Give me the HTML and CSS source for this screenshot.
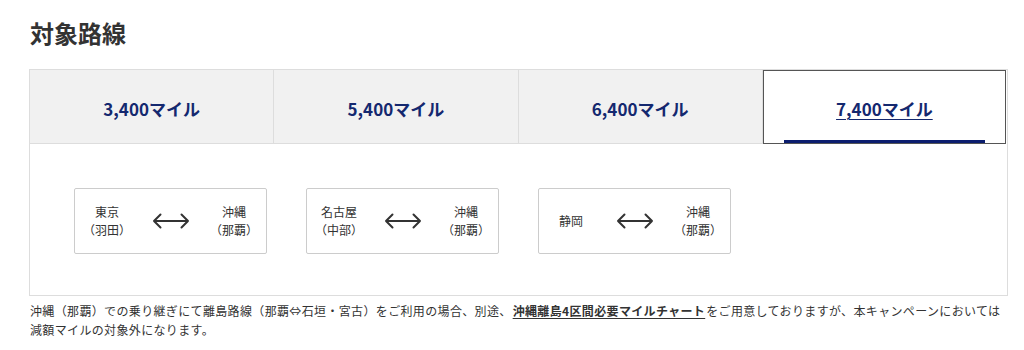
FILE: index.html
```html
<!DOCTYPE html>
<html lang="ja">
<head>
<meta charset="utf-8">
<link rel="stylesheet" href="styles.css">
</head>
<body>
<div class="page">
  <h2 class="title">対象路線</h2>
  <div class="tabbox">
    <div class="tabs">
      <div class="tab">3,400マイル</div>
      <div class="tab">5,400マイル</div>
      <div class="tab">6,400マイル</div>
      <div class="tab active"><span>7,400マイル</span></div>
    </div>
    <div class="panel">
      <div class="card">
        <div class="place">東京<br>（羽田）</div>
        <svg class="arrow" width="38" height="16" viewBox="0 0 38 16"><path d="M2 8H36M8.5 1.5L2 8L8.5 14.5M29.5 1.5L36 8L29.5 14.5" fill="none" stroke="#333" stroke-width="2" stroke-linecap="round" stroke-linejoin="round"/></svg>
        <div class="place">沖縄<br>（那覇）</div>
      </div>
      <div class="card">
        <div class="place">名古屋<br>（中部）</div>
        <svg class="arrow" width="38" height="16" viewBox="0 0 38 16"><path d="M2 8H36M8.5 1.5L2 8L8.5 14.5M29.5 1.5L36 8L29.5 14.5" fill="none" stroke="#333" stroke-width="2" stroke-linecap="round" stroke-linejoin="round"/></svg>
        <div class="place">沖縄<br>（那覇）</div>
      </div>
      <div class="card">
        <div class="place">静岡</div>
        <svg class="arrow" width="38" height="16" viewBox="0 0 38 16"><path d="M2 8H36M8.5 1.5L2 8L8.5 14.5M29.5 1.5L36 8L29.5 14.5" fill="none" stroke="#333" stroke-width="2" stroke-linecap="round" stroke-linejoin="round"/></svg>
        <div class="place">沖縄<br>（那覇）</div>
      </div>
    </div>
  </div>
  <p class="note">沖縄（那覇）での乗り継ぎにて離島路線（那覇⇔石垣・宮古）をご利用の場合、別途、<a class="link">沖縄離島4区間必要マイルチャート</a>をご用意しておりますが、本キャンペーンにおいては減額マイルの対象外になります。</p>
</div>
</body>
</html>
```

FILE: styles.css
```css
html, body {
  margin: 0;
  padding: 0;
  background: #fff;
}
body {
  font-family: "Noto Sans CJK JP", "Noto Sans", sans-serif;
  color: #333;
}
.page {
  padding: 0 16px 0 29px;
}
.title {
  margin: 0;
  padding: 18px 0 0 1px;
  height: 69px;
  box-sizing: border-box;
  font-size: 24px;
  line-height: 30px;
  font-weight: 700;
  color: #333;
}
.tabbox {
  width: 979px;
}
.tabs {
  display: flex;
  border: 1px solid #ddd;
  border-bottom: none;
}
.tab {
  flex: 1;
  height: 74px;
  box-sizing: border-box;
  padding-top: 3px;
  display: flex;
  align-items: center;
  justify-content: center;
  background: #f1f1f1;
  border-right: 1px solid #ddd;
  border-bottom: 1px solid #ddd;
  font-size: 17px;
  font-weight: 700;
  color: #14286f;
}
.tab:last-child {
  border-right: none;
}
.tab.active {
  position: relative;
  background: #fff;
  box-shadow: inset 0 0 0 1px #555;
  border-bottom: none;
  height: 74px;
  margin-right: 1px;
}
.tab.active span {
  text-decoration: underline;
  text-underline-offset: 3px;
  text-decoration-thickness: 1px;
}
.tab.active::after {
  content: "";
  position: absolute;
  left: 21px;
  right: 21px;
  bottom: 1px;
  height: 3px;
  background: #0b1d6e;
}
.panel {
  display: flex;
  gap: 39px;
  border: 1px solid #ddd;
  border-top: none;
  padding: 44px 44px 42px;
  height: 152px;
  box-sizing: border-box;
}
.card {
  width: 193px;
  height: 66px;
  box-sizing: border-box;
  border: 1px solid #ccc;
  border-radius: 2px;
  display: grid;
  grid-template-columns: 50px 1fr 50px;
  align-items: center;
  justify-items: center;
  padding: 0 7px;
}
.place {
  font-size: 12px;
  line-height: 18px;
  text-align: center;
  color: #333;
  white-space: nowrap;
}
.arrow {
  display: block;
}
.note {
  margin: 5px 0 0 1px;
  font-size: 12px;
  line-height: 19px;
  letter-spacing: 0.35px;
  color: #333;
  width: 976px;
}
.link {
  font-weight: 700;
  text-decoration: underline;
  text-underline-offset: 2px;
  color: #333;
  padding: 0 1px;
}
```
